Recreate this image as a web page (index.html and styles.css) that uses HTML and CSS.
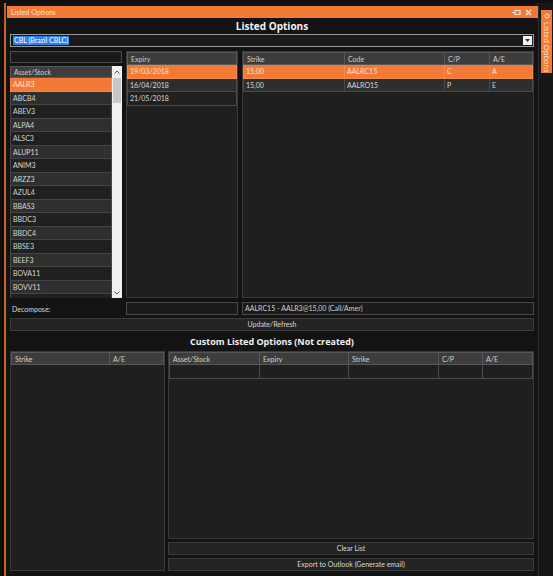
FILE: index.html
```html
<!DOCTYPE html>
<html>
<head>
<meta charset="utf-8">
<link rel="stylesheet" href="styles.css">
</head>
<body>
<div class="screen">
  <div class="window">
    <div class="titlebar">
      <span class="title">Listed Options</span>
      <span class="tools">
        <svg width="9" height="7" viewBox="0 0 9 7"><path d="M0 3.5H3M3 1V6M3 1.5H8V5.5H3" fill="none" stroke="#fbe3d2" stroke-width="1.2"/></svg>
        <svg width="7" height="7" viewBox="0 0 7 7"><path d="M1 1L6 6M6 1L1 6" stroke="#fbe3d2" stroke-width="1.4"/></svg>
      </span>
    </div>
    <div class="content">
      <h1 class="heading">Listed Options</h1>
      <div class="combo">
        <span class="combo-sel">CBL (Brazil CBLC)</span>
        <span class="combo-btn"><svg width="5" height="3" viewBox="0 0 5 3"><path d="M0 0H5L2.5 3Z" fill="#333"/></svg></span>
      </div>
      <div class="top-grid">
        <div class="col-left">
          <div class="search"></div>
          <div class="listbox">
            <div class="list-inner">
              <div class="hcell">Asset/Stock</div>
              <div class="row sel">AALR3</div>
              <div class="row odd">ABCB4</div>
              <div class="row">ABEV3</div>
              <div class="row odd">ALPA4</div>
              <div class="row">ALSC3</div>
              <div class="row odd">ALUP11</div>
              <div class="row">ANIM3</div>
              <div class="row odd">ARZZ3</div>
              <div class="row">AZUL4</div>
              <div class="row odd">BBAS3</div>
              <div class="row">BBDC3</div>
              <div class="row odd">BBDC4</div>
              <div class="row">BBSE3</div>
              <div class="row odd">BEEF3</div>
              <div class="row">BOVA11</div>
              <div class="row odd">BOVV11</div>
              <div class="row"></div>
            </div>
            <div class="scrollbar">
              <div class="sb-arrow"><svg width="6" height="4" viewBox="0 0 6 4"><path d="M0.5 3.5L3 1L5.5 3.5" fill="none" stroke="#555" stroke-width="1"/></svg></div>
              <div class="sb-track"><div class="sb-thumb"></div></div>
              <div class="sb-arrow"><svg width="6" height="4" viewBox="0 0 6 4"><path d="M0.5 0.5L3 3L5.5 0.5" fill="none" stroke="#555" stroke-width="1"/></svg></div>
            </div>
          </div>
        </div>
        <div class="panel">
          <table class="grid">
            <tr><th>Expiry</th></tr>
            <tr class="sel"><td>19/03/2018</td></tr>
            <tr class="odd"><td>16/04/2018</td></tr>
            <tr><td>21/05/2018</td></tr>
          </table>
        </div>
        <div class="panel">
          <table class="grid">
            <colgroup><col style="width:101px"><col style="width:100px"><col style="width:45px"><col></colgroup>
            <tr><th>Strike</th><th>Code</th><th>C/P</th><th>A/E</th></tr>
            <tr class="sel"><td>15,00</td><td>AALRC15</td><td>C</td><td>A</td></tr>
            <tr class="odd"><td>15,00</td><td>AALRO15</td><td>P</td><td>E</td></tr>
          </table>
        </div>
      </div>
      <div class="decompose">
        <span class="label">Decompose:</span>
        <div class="field"></div>
        <div class="field">AALRC15 - AALR3@15,00 (Call/Amer)</div>
      </div>
      <div class="btn">Update/Refresh</div>
      <h2 class="heading sub">Custom Listed Options (Not created)</h2>
      <div class="bottom">
        <div class="panel">
          <table class="grid">
            <colgroup><col style="width:98px"><col></colgroup>
            <tr><th>Strike</th><th>A/E</th></tr>
          </table>
        </div>
        <div class="bottom-right">
          <div class="panel grow">
            <table class="grid">
              <colgroup><col style="width:90px"><col style="width:89px"><col style="width:90px"><col style="width:44px"><col></colgroup>
              <tr><th>Asset/Stock</th><th>Expiry</th><th>Strike</th><th>C/P</th><th>A/E</th></tr>
              <tr class="empty"><td></td><td></td><td></td><td></td><td></td></tr>
            </table>
          </div>
          <div class="btn">Clear List</div>
          <div class="btn">Export to Outlook (Generate email)</div>
        </div>
      </div>
    </div>
  </div>
  <div class="side">
    <div class="side-tab">
      <svg width="6" height="6" viewBox="0 0 6 6"><circle cx="3" cy="3" r="2" fill="none" stroke="#fbe3d2" stroke-width="1"/></svg>
      <span>Listed Options</span>
    </div>
  </div>
</div>
</body>
</html>
```

FILE: styles.css
```css
* { box-sizing: border-box; }
html, body { margin: 0; padding: 0; }
body {
  width: 553px;
  height: 576px;
  background: #0e0e0e;
  font-family: Lato, "Open Sans", sans-serif;
  font-size: 7px;
  color: #d6d6d6;
  overflow: hidden;
}
.screen {
  display: flex;
  height: 576px;
  padding: 3px 0 0 4px;
}
.window {
  width: 534px;
  border-left: 2px solid #c8622b;
  display: flex;
  flex-direction: column;
  background: #131313;
  padding-top: 3px;
}
.titlebar {
  height: 12px;
  flex: none;
  background: #f07a36;
  margin-left: 1px;
  display: flex;
  align-items: center;
  justify-content: space-between;
  padding: 0 6px 0 4px;
  color: #fbe0cf;
}
.title { font-size: 7px; }
.tools { display: flex; gap: 4px; align-items: center; }
.content {
  flex: 1;
  min-height: 0;
  padding: 0 4px 0 4px;
  display: flex;
  flex-direction: column;
}
.heading {
  margin: 0;
  height: 16px;
  flex: none;
  line-height: 17px;
  text-align: center;
  font-family: "Open Sans", sans-serif;
  font-size: 10px;
  font-weight: 700;
  color: #f2f2f2;
}
.combo {
  height: 13px;
  flex: none;
  border: 1px solid #9a9a9a;
  background: #1a1a1a;
  display: flex;
  align-items: center;
  justify-content: space-between;
  padding: 0 1px 0 2px;
}
.combo-sel {
  background: #2f7fe6;
  color: #fff;
  line-height: 9px;
  padding: 0 1px;
}
.combo-btn {
  width: 9px;
  height: 9px;
  background: #f4f4f4;
  display: flex;
  align-items: center;
  justify-content: center;
}
.top-grid {
  margin-top: 4px;
  height: 247px;
  flex: none;
  display: grid;
  grid-template-columns: 112px 112px 1fr;
  grid-template-rows: 247px;
  column-gap: 4px;
  overflow: hidden;
}
.col-left { display: flex; flex-direction: column; gap: 3px; min-height: 0; }
.search {
  height: 12px;
  flex: none;
  background: #1a1a1a;
  border: 1px solid #4a4a4a;
}
.listbox {
  flex: 1;
  min-height: 0;
  display: flex;
  overflow: hidden;
  background: #1e1e1e;
}
.list-inner { flex: 1; overflow: hidden; }
.hcell, .grid th {
  height: 12px;
  background: #3d3d3d;
  border: 1px solid #585858;
  color: #cfcfcf;
  font-weight: 400;
  text-align: left;
  padding: 0 3px;
  line-height: 10px;
}
.row {
  height: 13.5px;
  line-height: 12px;
  padding: 0 2px;
  border: 1px solid #454545;
  border-top: none;
  background: #202020;
}
.row.odd { background: #2f2f2f; }
.row.sel, .grid tr.sel td { background: #f27a36; color: #ffe3d2; border-color: #f58a4c; }
.scrollbar {
  width: 10px;
  flex: none;
  background: #f0f0f0;
  display: flex;
  flex-direction: column;
}
.sb-arrow {
  height: 11px;
  display: flex;
  align-items: center;
  justify-content: center;
}
.sb-track { flex: 1; }
.sb-thumb { height: 25px; margin: 1px 1px 0; background: #c8c8c8; }
.panel {
  background: #1f1f1f;
  border: 1px solid #3a3a3a;
  min-height: 0;
  overflow: hidden;
}
.grid {
  width: 100%;
  border-collapse: collapse;
  table-layout: fixed;
}
.grid td {
  height: 13.5px;
  padding: 0 2px;
  border: 1px solid #4a4a4a;
  background: #202020;
  white-space: nowrap;
}
.grid tr.odd td { background: #2e2e2e; }
.grid tr.empty td { background: #1f1f1f; border-color: #4a4a4a; }
.decompose {
  margin-top: 4px;
  height: 13px;
  flex: none;
  display: grid;
  grid-template-columns: 112px 112px 1fr;
  column-gap: 4px;
  align-items: center;
}
.label { padding-left: 2px; color: #d8d8d8; }
.field {
  height: 13px;
  border: 1px solid #4a4a4a;
  background: #1a1a1a;
  line-height: 11px;
  padding: 0 2px;
  color: #cfcfcf;
}
.btn {
  height: 13px;
  flex: none;
  margin-top: 3px;
  background: #232323;
  border: 1px solid #3c3c3c;
  text-align: center;
  line-height: 11px;
  color: #d8d8d8;
}
.heading.sub { height: 20px; line-height: 22px; font-size: 9px; }
.bottom {
  flex: 1;
  min-height: 0;
  display: grid;
  grid-template-columns: 155px 1fr;
  column-gap: 3px;
  padding-bottom: 5px;
}
.bottom-right { display: flex; flex-direction: column; min-height: 0; }
.grow { flex: 1; }
.side {
  width: 15px;
  background: #161616;
  border-left: 1px solid #2a2a2a;
  padding: 7px 0 0 2px;
}
.side-tab {
  width: 11px;
  height: 63px;
  background: #f07a36;
  writing-mode: vertical-rl;
  display: flex;
  align-items: center;
  gap: 3px;
  padding-top: 3px;
  color: #fff0e6;
  font-family: "Open Sans", sans-serif;
  font-size: 7.5px;
  line-height: 11px;
}
```
